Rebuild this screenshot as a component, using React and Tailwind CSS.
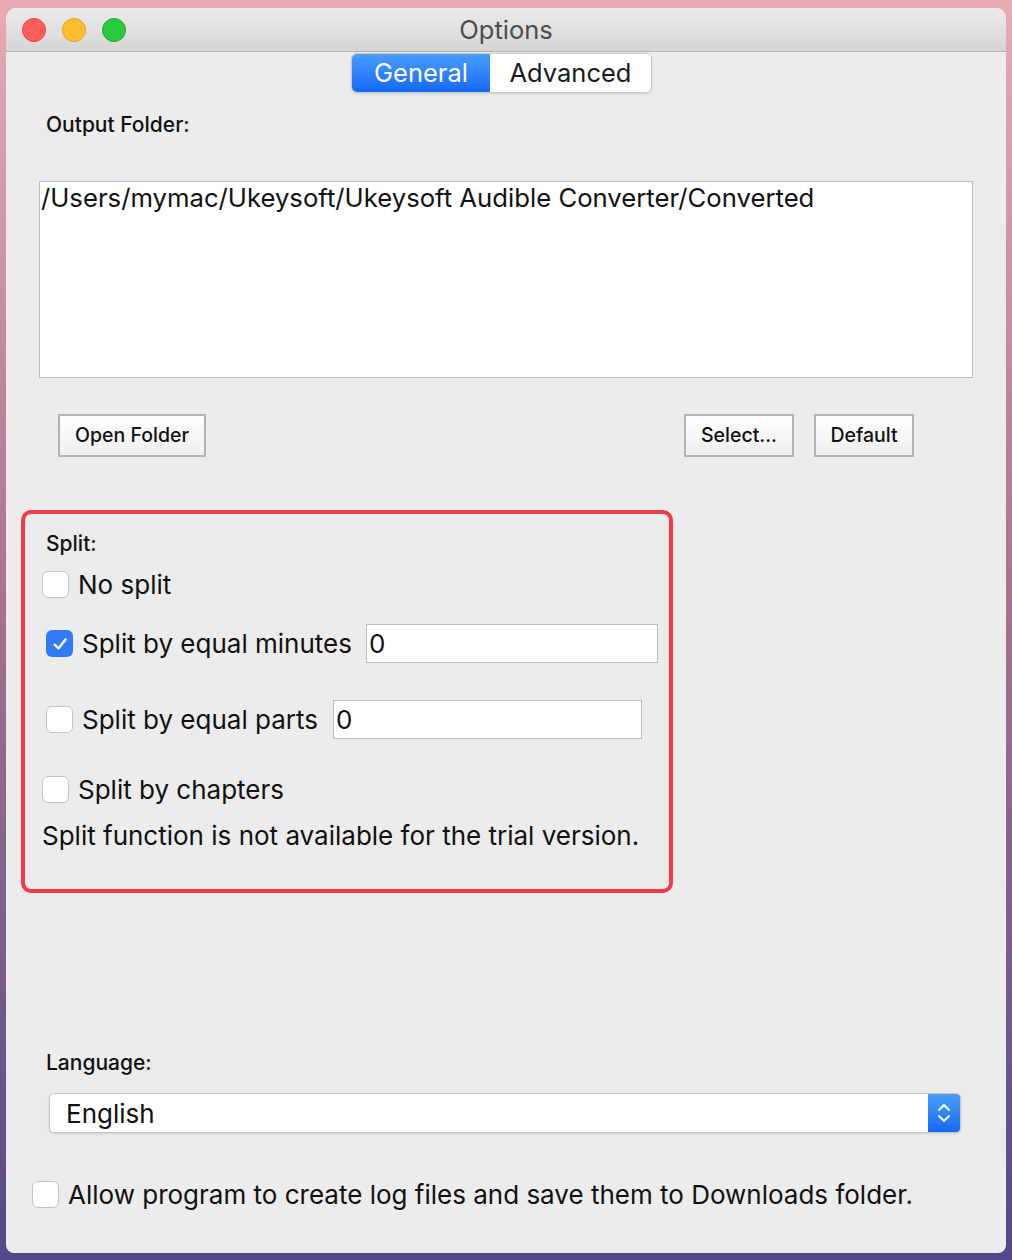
import React from 'react';

const font = { fontFamily: 'Inter, "Liberation Sans", Arial, sans-serif' };

const Checkbox = ({ checked }) => (
    <div
        className={
            checked
                ? 'w-[27px] h-[27px] rounded-[6px] bg-[#2f7cf6] flex items-center justify-center shrink-0'
                : 'w-[27px] h-[27px] rounded-[6px] bg-white border border-[#c4c4c4] shrink-0'
        }
    >
        {checked && (
            <svg width="18" height="18" viewBox="0 0 18 18">
                <path d="M3.5 9.5 L7.5 13.5 L14.5 4.5" fill="none" stroke="white" strokeWidth="2.4" strokeLinecap="round" strokeLinejoin="round" />
            </svg>
        )}
    </div>
);

const PushButton = ({ label, className }) => (
    <div
        className={
            'h-[43px] flex items-center justify-center border-2 border-[#b3b3b3] bg-gradient-to-b from-white to-[#eeeeee] text-[19.5px] font-medium text-[#111] ' +
            className
        }
    >
        {label}
    </div>
);

const App = () => {
    return (
        <div
            className="w-[1012px] h-[1260px] pt-[8px] pl-[6px] bg-gradient-to-b from-[#e9aab6] via-[#a4708f] to-[#54478a]"
            style={font}
        >
            <div className="w-[1000px] h-[1245px] bg-[#ececec] rounded-t-[10px] rounded-b-[8px] overflow-hidden flex flex-col">
                {/* title bar */}
                <div className="h-[44px] shrink-0 relative flex items-center justify-center bg-gradient-to-b from-[#ebebeb] to-[#d5d5d5] border-b border-[#b1b1b1]">
                    <div className="absolute left-[16px] top-[10px] flex gap-[16px]">
                        <div className="w-[24px] h-[24px] rounded-full bg-[#fe5f57] border border-[#e2463f]" />
                        <div className="w-[24px] h-[24px] rounded-full bg-[#febc2e] border border-[#dfa023]" />
                        <div className="w-[24px] h-[24px] rounded-full bg-[#28c840] border border-[#1aab29]" />
                    </div>
                    <span className="text-[25.5px] text-[#4d4d4d] pt-[2px]">Options</span>
                </div>

                {/* segmented control */}
                <div className="ml-[345px] mt-[1px] flex w-[301px] h-[40px] rounded-[6px] border border-[#c9c9c9] overflow-hidden text-[25.5px] shadow-sm">
                    <div className="w-[138px] flex items-center justify-center bg-gradient-to-b from-[#4a9dfc] to-[#1468f4] text-white">
                        General
                    </div>
                    <div className="flex-1 flex items-center justify-center bg-white text-[#1a1a1a]">
                        Advanced
                    </div>
                </div>

                <div className="ml-[40px] mt-[20px] text-[21px] font-medium leading-[24px] text-[#111]">Output Folder:</div>

                <div className="ml-[33px] mt-[44px] w-[934px] h-[197px] bg-white border border-[#bcbcbc] pl-[1px] pt-[1px] text-[25.7px] leading-[30px] text-[#111]">
                    /Users/mymac/Ukeysoft/Ukeysoft Audible Converter/Converted
                </div>

                <div className="mt-[36px] flex">
                    <PushButton label="Open Folder" className="ml-[52px] w-[148px]" />
                    <PushButton label="Select..." className="ml-[478px] w-[110px]" />
                    <PushButton label="Default" className="ml-[20px] w-[100px]" />
                </div>

                {/* split box */}
                <div className="ml-[15px] mt-[53px] w-[652px] h-[383px] border-[4px] border-[#f23a4b] rounded-[10px] pt-[18px] flex flex-col text-[#111]">
                    <div className="ml-[21px] text-[21px] font-medium leading-[24px]">Split:</div>

                    <div className="ml-[17px] mt-[15px] flex items-center gap-[9px] h-[27px]">
                        <Checkbox />
                        <span className="text-[26px]">No split</span>
                    </div>

                    <div className="ml-[21px] mt-[26px] flex items-center h-[39px]">
                        <Checkbox checked />
                        <span className="ml-[9px] text-[26px]">Split by equal minutes</span>
                        <div className="ml-[14px] w-[292px] h-[39px] bg-white border border-[#bdbdbd] text-[26px] leading-[37px] pl-[2px]">0</div>
                    </div>

                    <div className="ml-[21px] mt-[37px] flex items-center h-[39px]">
                        <Checkbox />
                        <span className="ml-[9px] text-[26px]">Split by equal parts</span>
                        <div className="ml-[15px] w-[309px] h-[39px] bg-white border border-[#bdbdbd] text-[26px] leading-[37px] pl-[2px]">0</div>
                    </div>

                    <div className="ml-[17px] mt-[37px] flex items-center gap-[9px] h-[27px]">
                        <Checkbox />
                        <span className="text-[26px]">Split by chapters</span>
                    </div>

                    <div className="ml-[17px] mt-[17px] text-[26px] leading-[32px]">
                        Split function is not available for the trial version.
                    </div>
                </div>

                <div className="ml-[40px] mt-[158px] text-[21px] font-medium leading-[24px] text-[#111]">Language:</div>

                <div className="ml-[43px] mt-[18px] w-[912px] h-[40px] flex rounded-[5px] bg-white border border-[#c6c6c6] shadow-sm overflow-hidden">
                    <div className="flex-1 flex items-center pl-[16px] text-[26px] text-[#111]">English</div>
                    <div className="w-[32px] bg-gradient-to-b from-[#4a9dfc] to-[#1468f4] flex items-center justify-center">
                        <svg width="16" height="26" viewBox="0 0 16 26">
                            <path d="M3 10 L8 5 L13 10" fill="none" stroke="white" strokeWidth="2" strokeLinecap="round" strokeLinejoin="round" />
                            <path d="M3 16 L8 21 L13 16" fill="none" stroke="white" strokeWidth="2" strokeLinecap="round" strokeLinejoin="round" />
                        </svg>
                    </div>
                </div>

                <div className="ml-[26px] mt-[48px] flex items-center gap-[9px] h-[27px]">
                    <Checkbox />
                    <span className="text-[26px] text-[#111]">Allow program to create log files and save them to Downloads folder.</span>
                </div>
            </div>
        </div>
    );
};

export default App;
